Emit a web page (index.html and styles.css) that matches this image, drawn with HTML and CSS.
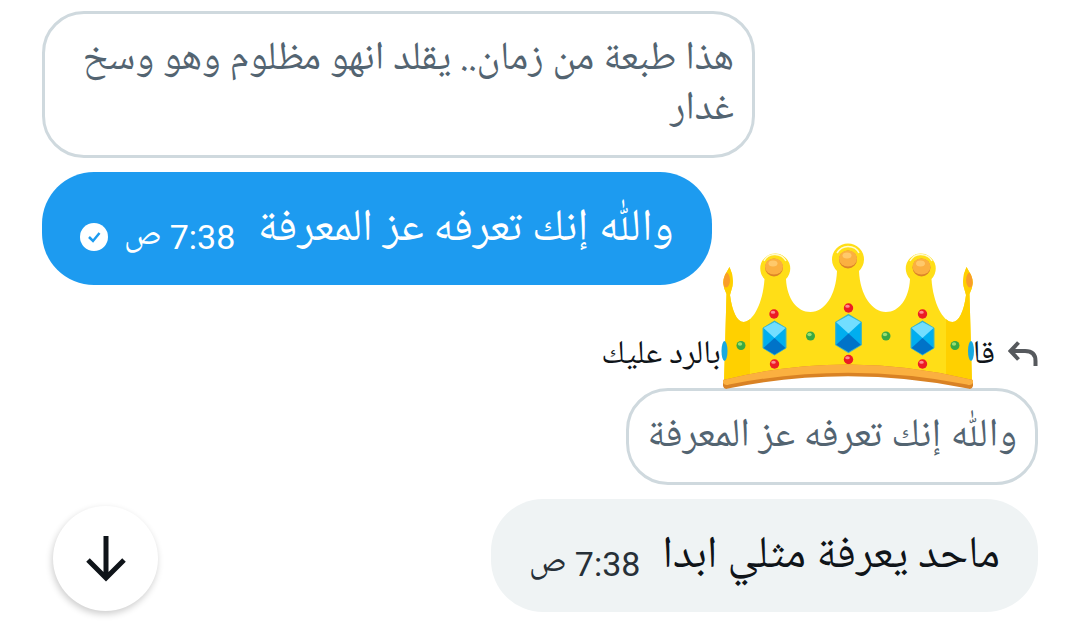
FILE: index.html
```html
<!DOCTYPE html>
<html lang="ar" dir="rtl">
<head>
    <meta charset="UTF-8">
    <meta name="viewport" content="width=device-width, initial-scale=1.0">
    <title>الرسائل</title>
    <link rel="stylesheet" href="styles.css">
</head>
<body>
    <main class="chat">
        <div class="quote quote-sent">هذا طبعة من زمان.. يقلد انهو مظلوم وهو وسخ غدار</div>

        <div class="bubble sent">
            <span class="text">واللّٰه إنك تعرفه عز المعرفة</span>
            <span class="time">7:38 ص</span>
            <svg class="check" viewBox="0 0 28 28" aria-hidden="true">
                <circle cx="14" cy="14" r="14" fill="#fff"/>
                <path d="M9 14l4 4 6.500-8" fill="none" stroke="#1d9bf0" stroke-width="2.500"/>
            </svg>
        </div>

        <div class="reply">
            <svg class="reply-icon" viewBox="0 0 30 26" aria-hidden="true">
                <path d="M10.500 1.500L2.500 10l8 8.500M3 10h14q10.500 0 10.500 10v5" fill="none" stroke="#56595d" stroke-width="4"/>
            </svg>
            <span>قا</span>
            <span class="name">
                <svg class="crown" viewBox="722 242 254 150" aria-hidden="true">
                    <defs>
                        <clipPath id="body">
                            <path id="shape" d="M725 383L727.500 294Q722 284 726 275L730.500 267Q735 276 733.500 286L731 295C733 311 738 322 744.500 322C754 322 764 303 765.500 279A15 15 0 1 1 787 279C788 299 798 312 811.500 312C826 312 837 295 838 271A16 16 0 1 1 860 271C861 295 873 312 887 312C900 312 910 299 911 279A15 15 0 1 1 932.500 279C934 303 944 322 953.500 322C960 322 965 311 967 295L964.500 286Q963 276 967.500 267L972 275Q976 284 970.500 294L973 383Q849 357 725 383Z"/>
                        </clipPath>
                        <g id="gem">
                            <path d="M0-17L11.500-10V10L0 17L-11.500 10V-10Z" fill="#00aeef" stroke="#4cb5b5" stroke-width="1"/>
                            <path d="M0-16L11-10L0 0L-11-10Z" fill="#72deff"/>
                            <path d="M0 0L11 10L0 16.500L-11 10Z" fill="#0073c8"/>
                        </g>
                        <g id="ruby">
                            <circle r="4.700" fill="#ec1c24"/>
                            <ellipse cx="-1" cy="-1.800" rx="2.300" ry="1.500" fill="#ff8a8f"/>
                        </g>
                        <g id="emerald">
                            <circle r="4.500" fill="#39a944"/>
                            <ellipse cx="-1" cy="-1.500" rx="2.200" ry="1.700" fill="#9be070"/>
                        </g>
                        <g id="ball">
                            <circle r="9" fill="#dc8528"/>
                            <ellipse cy="-1" rx="9" ry="8" fill="#fbb040"/>
                            <ellipse cx="-1" cy="-4" rx="4.500" ry="3" fill="#ffc96b"/>
                        </g>
                    </defs>
                    <use href="#shape" fill="#ffde17"/>
                    <g clip-path="url(#body)">
                        <path d="M720 260H751V390H720ZM947 260H978V390H947Z" fill="#ffd000"/>
                        <ellipse cx="727" cy="280" rx="4" ry="7.500" fill="#f99d2a"/>
                        <ellipse cx="971" cy="280" rx="4" ry="7.500" fill="#f99d2a"/>
                    </g>
                    <ellipse cx="725.500" cy="351" rx="3" ry="10" fill="#19a9df"/>
                    <path d="M765 261Q768 255 775 254.500Q783 254 787 261M838 253Q842 246.500 849 246.500Q857 246.500 860 253M911 261Q915 254 922 254.500Q930 255 933 261" fill="none" stroke="#fffbd0" stroke-width="1.500"/>
                    <use href="#ball" x="775" y="267.500"/>
                    <use href="#ball" x="849" y="259.500"/>
                    <use href="#ball" x="922.500" y="267.500"/>
                    <use href="#gem" x="775.500" y="338"/>
                    <use href="#gem" transform="translate(849.500 333.500) scale(1.120)"/>
                    <use href="#gem" x="923.500" y="338"/>
                    <use href="#ruby" x="775" y="314"/>
                    <use href="#ruby" x="775.500" y="364"/>
                    <use href="#ruby" x="849.500" y="308"/>
                    <use href="#ruby" x="849.500" y="359.500"/>
                    <use href="#ruby" x="923.500" y="314"/>
                    <use href="#ruby" x="923.500" y="364"/>
                    <use href="#emerald" x="742" y="345.500"/>
                    <use href="#emerald" x="811.500" y="336"/>
                    <use href="#emerald" x="887" y="336"/>
                    <use href="#emerald" x="956" y="345.500"/>
                    <ellipse cx="972" cy="351" rx="3" ry="10" fill="#19a9df"/>
                    <path d="M724 380Q849 349 974 380V386Q973 390 969 388.500Q849 364 729 388.500Q725 390 724 386Z" fill="#d98224"/>
                    <path d="M724 380Q849 349 974 380V383Q972 386 968 384.500Q849 361 730 384.500Q726 386 724 383Z" fill="#fbb040"/>
                </svg>
            </span>
            <span>بالرد عليك</span>
        </div>

        <div class="quote quote-received">واللّٰه إنك تعرفه عز المعرفة</div>

        <div class="bubble received">
            <span class="text">ماحد يعرفة مثلي ابدا</span>
            <span class="time">7:38 ص</span>
        </div>
    </main>

    <button class="scroll-down" type="button" aria-label="الانتقال إلى الأسفل">
        <svg viewBox="0 0 40 46" aria-hidden="true">
            <path d="M20 0V42M2 24l18 18 18-18" fill="none" stroke="#0f1419" stroke-width="5"/>
        </svg>
    </button>
</body>
</html>
```

FILE: styles.css
```css
* {
    box-sizing: border-box;
}

body {
    margin: 0;
    background-color: #fff;
    color: #0f1419;
    font-family: "Noto Naskh Arabic UI", "Noto Naskh Arabic", Roboto, "Noto Sans", sans-serif;
}

.chat {
    display: flex;
    flex-direction: column;
    align-items: flex-start;
    padding: 11px 42px 26px;
}

.quote {
    padding: 20px 18px;
    border: 3px solid #cfd9de;
    border-radius: 42px;
    color: #536471;
    font-size: 40px;
    line-height: 50px;
}

.quote-sent {
    align-self: flex-end;
    max-width: 713px;
    min-height: 147px;
}

.bubble {
    display: flex;
    align-items: center;
    height: 113px;
    padding: 0 38px;
    border-radius: 52px;
    font-size: 45px;
    line-height: 56px;
}

.sent {
    align-self: flex-end;
    margin-top: 14px;
    background-color: #1d9bf0;
    color: #fff;
}

.received {
    margin-top: 14px;
    background-color: #eff3f4;
}

.time {
    margin-right: 22px;
    padding-top: 16px;
    font-family: Roboto, "Noto Naskh Arabic UI", "Noto Naskh Arabic", sans-serif;
    font-size: 34px;
}

.received .time {
    color: #273038;
}

.check {
    width: 28px;
    height: 28px;
    margin-top: 16px;
    margin-right: 16px;
}

.reply {
    display: flex;
    align-items: center;
    height: 40px;
    margin-top: 49px;
    font-size: 33px;
}

.reply-icon {
    width: 30px;
    height: 26px;
    margin-left: 13px;
}

.name {
    position: relative;
    align-self: stretch;
    width: 252px;
}

/* the crown covers the name and spills over the rows around it */
.crown {
    position: absolute;
    bottom: -18px;
    left: 0;
    width: 254px;
    height: 150px;
}

.quote-received {
    min-height: 97px;
    margin-top: 14px;
}

.scroll-down {
    position: fixed;
    bottom: 27px;
    left: 53px;
    display: flex;
    align-items: center;
    justify-content: center;
    width: 105px;
    height: 105px;
    border: none;
    border-radius: 50%;
    background-color: #fff;
    box-shadow: -1px 3px 7px rgba(0, 0, 0, 0.2);
    cursor: pointer;
}

.scroll-down svg {
    width: 40px;
    height: 46px;
}
```
